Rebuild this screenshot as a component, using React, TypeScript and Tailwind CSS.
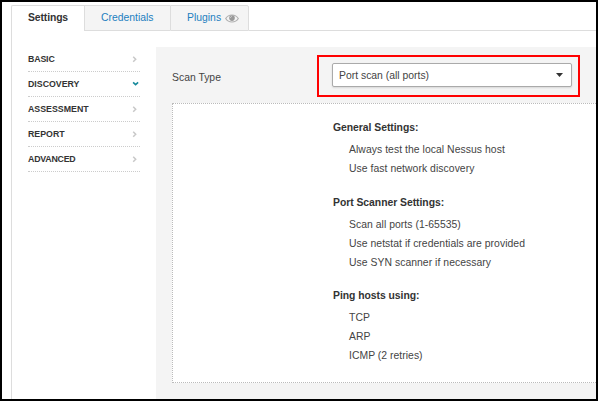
import React from "react";

const sections = [
  { name: "BASIC", tracking: "tracking-[-0.15px]" },
  { name: "DISCOVERY", tracking: "tracking-normal" },
  { name: "ASSESSMENT", tracking: "tracking-normal" },
  { name: "REPORT", tracking: "tracking-normal" },
  { name: "ADVANCED", tracking: "tracking-[-0.22px]" },
];

const groups = [
  {
    title: "General Settings:",
    items: ["Always test the local Nessus host", "Use fast network discovery"],
    space: "h-[75px]",
    list: "mt-[3px] tracking-[0.05px]",
  },
  {
    title: "Port Scanner Settings:",
    items: [
      "Scan all ports (1-65535)",
      "Use netstat if credentials are provided",
      "Use SYN scanner if necessary",
    ],
    space: "h-[93px]",
    list: "mt-[2.6px] tracking-[0.04px]",
  },
  {
    title: "Ping hosts using:",
    items: ["TCP", "ARP", "ICMP (2 retries)"],
    space: "h-[80px]",
    list: "mt-[3px] tracking-[0.03px]",
  },
];

function Eye() {
  return (
    <svg className="ml-[4px] mt-px h-[9px] w-[14px]" viewBox="0 0 14 9" fill="none">
      <path d="M.7 4.5C2.2 2.1 4.3 1 7 1S11.8 2.1 13.3 4.5C11.8 6.9 9.7 8 7 8S2.2 6.9.7 4.5Z" stroke="#b0b0b0" strokeWidth="1.2" />
      <circle cx="7" cy="4.1" r="2.8" fill="#999" />
      <path d="M5.5 4C5.5 3.1 6.1 2.5 7 2.5" stroke="#e4e4e4" strokeWidth=".7" />
    </svg>
  );
}

function Chevron({ open }: { open: boolean }) {
  return open ? (
    <svg className="mr-px h-[6px] w-[7px]" viewBox="0 0 7 6" fill="none">
      <path d="M1.1 1.3 3.6 3.6 6.1 1.3" stroke="#168a9c" strokeWidth="1.6" />
    </svg>
  ) : (
    <svg className="mr-[3px] h-[7px] w-[5px]" viewBox="0 0 5 7" fill="none">
      <path d="M1.2 .8 3.7 3.3 1.2 5.8" stroke="#c8c8c8" strokeWidth="1.5" />
    </svg>
  );
}

export default function App() {
  return (
    <div className="flex h-[401px] w-[598px] flex-col overflow-hidden border-2 border-black bg-white pl-[9px] pt-[3px] font-['Liberation_Sans',Arial,sans-serif] text-[10.4px] text-[#444]">
      <nav className="flex h-[26px] shrink-0">
        <div className="flex w-[73px] rounded-tl-[2px] border-l border-t border-[#ddd] pl-[16px] font-bold leading-[23px] tracking-[-0.12px] text-[#333]">
          Settings
        </div>
        <div className="flex w-[86px] border-b border-l border-t border-[#ddd] bg-[#f4f4f4] pl-[16px] leading-[23px] text-[#1c7fc0]">
          Credentials
        </div>
        <div className="flex w-[79px] items-center rounded-tr-[2px] border border-[#ddd] bg-[#f4f4f4] pl-[16px] leading-[23px] text-[#1c7fc0]">
          <span className="h-[24px]">Plugins</span>
          <Eye />
        </div>
        <div className="flex-1 border-b border-[#ddd]" />
      </nav>
      <div className="flex flex-1 border-l border-[#ddd]">
        <aside className="w-[144px] pl-[16px] pr-[16px] pt-[16px]">
          {sections.map(({ name, tracking }) => (
            <div
              key={name}
              className="flex h-[25px] items-center justify-between border-b border-dotted border-[#ccc] text-[8.8px] font-bold leading-[24px] text-[#333]"
            >
              <span className={tracking}>{name}</span>
              <Chevron open={name === "DISCOVERY"} />
            </div>
          ))}
        </aside>
        <main className="mt-[16px] flex-1 bg-[#f4f4f4] pl-[16px]">
          <div className="flex h-[56px] pt-[8px]">
            <span className="w-[145px] pt-[16px] leading-[13px]">Scan Type</span>
            <div className="h-[42px] w-[263px] border-2 border-[#f00] pl-[13px] pr-[6px] pt-[6px]">
              <div className="flex h-[24px] w-[240px] items-center justify-between rounded-[2px] border border-[#aaa] bg-white pl-[6px] pr-[8px] shadow-[0_1px_2px_rgba(0,0,0,0.12)]">
                <span className="pt-px leading-[23px]">Port scan (all ports)</span>
                <svg className="h-[4px] w-[7px]" viewBox="0 0 7 4">
                  <path d="M0 0H7L3.5 4Z" fill="#333" />
                </svg>
              </div>
            </div>
          </div>
          <div className="h-[280px] border-y border-l border-dotted border-[#bbb] bg-white pl-[160px] pt-[14px]">
            {groups.map((group) => (
              <section key={group.title} className={group.space}>
                <h3 className="h-[19px] font-bold leading-[19px] tracking-[-0.04px] text-[#333]">{group.title}</h3>
                <ul className={`pl-[16px] ${group.list}`}>
                  {group.items.map((item) => (
                    <li key={item} className="h-[19.2px] leading-[19.2px]">{item}</li>
                  ))}
                </ul>
              </section>
            ))}
          </div>
        </main>
      </div>
    </div>
  );
}
